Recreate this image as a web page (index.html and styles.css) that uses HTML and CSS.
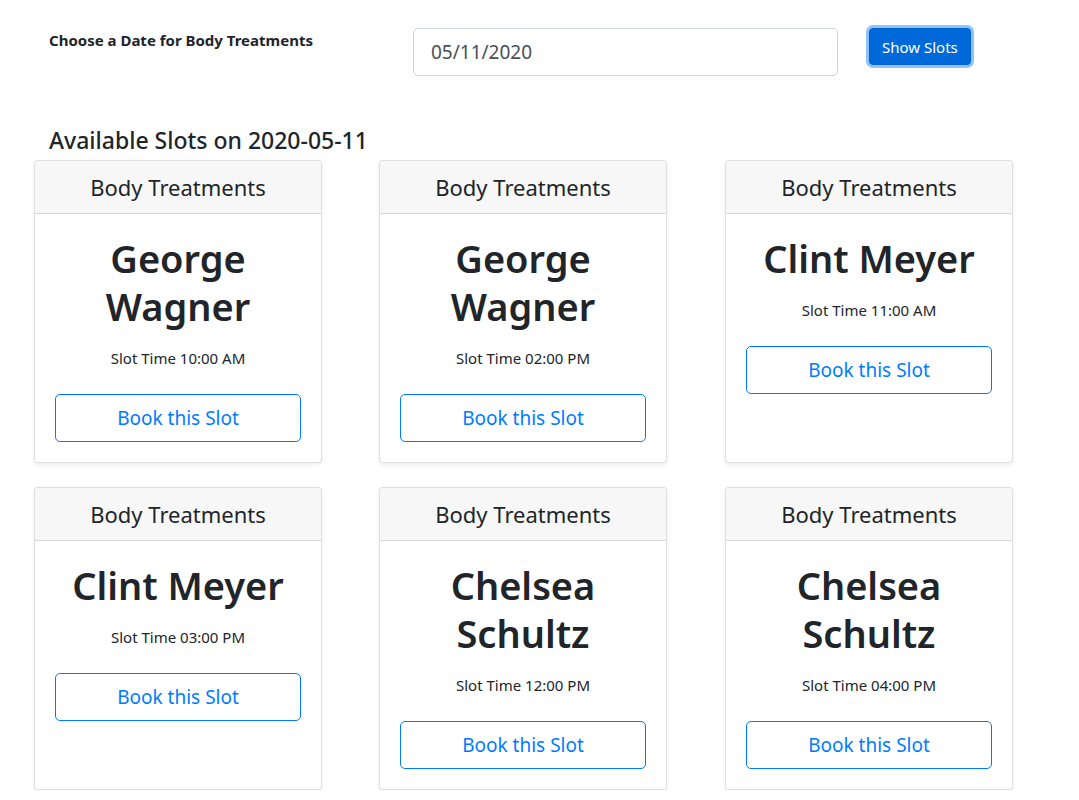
FILE: index.html
```html
<!DOCTYPE html>
<html lang="en">
<head>
<meta charset="utf-8">
<title>Body Treatments Slots</title>
<link rel="stylesheet" href="styles.css">
</head>
<body>
<div class="page">
  <form class="date-form">
    <label class="date-label" for="date">Choose a Date for Body Treatments</label>
    <input class="date-input" id="date" type="text" value="05/11/2020">
    <button class="btn-show" type="button">Show Slots</button>
  </form>

  <h4 class="slots-title">Available Slots on 2020-05-11</h4>

  <div class="cards">
    <div class="card">
      <div class="card-header">Body Treatments</div>
      <div class="card-body">
        <h1 class="name">George<br>Wagner</h1>
        <p class="slot">Slot Time 10:00 AM</p>
        <button class="btn-book" type="button">Book this Slot</button>
      </div>
    </div>
    <div class="card">
      <div class="card-header">Body Treatments</div>
      <div class="card-body">
        <h1 class="name">George<br>Wagner</h1>
        <p class="slot">Slot Time 02:00 PM</p>
        <button class="btn-book" type="button">Book this Slot</button>
      </div>
    </div>
    <div class="card">
      <div class="card-header">Body Treatments</div>
      <div class="card-body">
        <h1 class="name">Clint Meyer</h1>
        <p class="slot">Slot Time 11:00 AM</p>
        <button class="btn-book" type="button">Book this Slot</button>
      </div>
    </div>
    <div class="card">
      <div class="card-header">Body Treatments</div>
      <div class="card-body">
        <h1 class="name">Clint Meyer</h1>
        <p class="slot">Slot Time 03:00 PM</p>
        <button class="btn-book" type="button">Book this Slot</button>
      </div>
    </div>
    <div class="card">
      <div class="card-header">Body Treatments</div>
      <div class="card-body">
        <h1 class="name">Chelsea<br>Schultz</h1>
        <p class="slot">Slot Time 12:00 PM</p>
        <button class="btn-book" type="button">Book this Slot</button>
      </div>
    </div>
    <div class="card">
      <div class="card-header">Body Treatments</div>
      <div class="card-body">
        <h1 class="name">Chelsea<br>Schultz</h1>
        <p class="slot">Slot Time 04:00 PM</p>
        <button class="btn-book" type="button">Book this Slot</button>
      </div>
    </div>
  </div>
</div>
</body>
</html>
```

FILE: styles.css
```css
* { box-sizing: border-box; }

html, body {
  margin: 0;
  padding: 0;
  background: #fff;
}

body {
  font-family: "Noto Sans", "Open Sans", sans-serif;
  color: #212529;
}

.page {
  padding: 28px 0 0 34px;
}

.date-form {
  display: flex;
  align-items: flex-start;
  margin: 0 0 0 15px;
}

.date-label {
  width: 364px;
  padding-top: 2px;
  font-size: 15px;
  line-height: 21px;
  font-weight: 700;
}

.date-input {
  width: 425px;
  height: 48px;
  padding: 8px 17px;
  font-family: inherit;
  font-size: 19px;
  color: #495057;
  border: 1px solid #ced4da;
  border-radius: 5px;
  background: #fff;
  outline: none;
}

.btn-show {
  margin-left: 31px;
  height: 37px;
  padding: 0 12px;
  font-family: inherit;
  font-size: 15px;
  color: #fff;
  background: #0069d9;
  border: 1px solid #0062cc;
  border-radius: 4px;
  box-shadow: 0 0 0 3px #8fc3ff;
}

.slots-title {
  margin: 50px 0 6px 15px;
  font-size: 23px;
  line-height: 28px;
  font-weight: 500;
}

.cards {
  display: grid;
  grid-template-columns: 288px 288px 289px;
  column-gap: 57px;
  row-gap: 24px;
}

.card {
  display: flex;
  flex-direction: column;
  border: 1px solid rgba(0, 0, 0, 0.125);
  border-radius: 4px;
  background: #fff;
  box-shadow: 0 2px 4px rgba(0, 0, 0, 0.075);
  overflow: hidden;
}

.card:nth-child(3n) {
  margin-left: 1px;
}

.card-header {
  padding: 12px 20px;
  font-size: 22px;
  line-height: 28px;
  text-align: center;
  background: #f7f7f7;
  border-bottom: 1px solid rgba(0, 0, 0, 0.125);
}

.card-body {
  padding: 20px;
  text-align: center;
}

.name {
  margin: 0;
  font-size: 38px;
  line-height: 48px;
  font-weight: 600;
}

.slot {
  margin: 16px 0 24px;
  font-size: 15px;
  line-height: 24px;
}

.btn-book {
  display: block;
  width: 100%;
  height: 48px;
  font-family: inherit;
  font-size: 19px;
  color: #007bff;
  background: #fff;
  border: 1px solid #007bff;
  border-radius: 5px;
}
```
